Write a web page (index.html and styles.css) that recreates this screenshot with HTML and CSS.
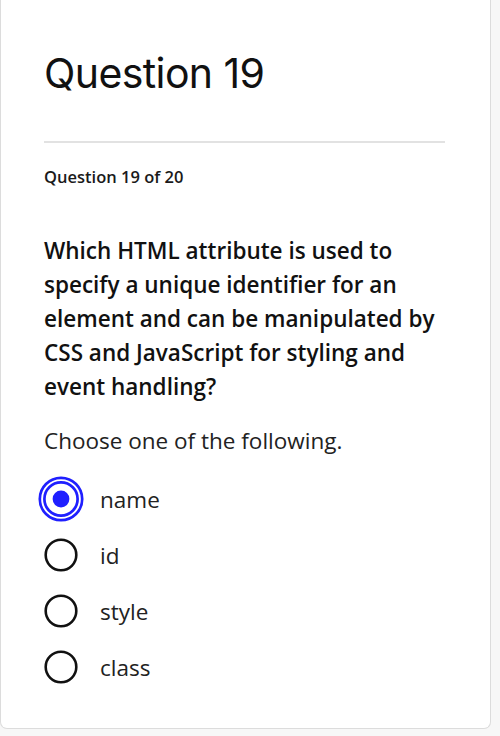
FILE: index.html
```html
<!DOCTYPE html>
<html>
<head>
<meta charset="utf-8">
<link rel="stylesheet" href="styles.css">
</head>
<body>
<div class="card">
  <h1 class="title">Question 19</h1>
  <hr class="divider">
  <div class="counter">Question 19 of 20</div>
  <p class="question">Which HTML attribute is used to specify a unique identifier for an element and can be manipulated by CSS and JavaScript for styling and event handling?</p>
  <p class="prompt">Choose one of the following.</p>
  <div class="options">
    <div class="option">
      <span class="radio">
        <svg width="48" height="48" viewBox="0 0 48 48"><circle cx="24" cy="24" r="21.2" fill="none" stroke="#1f1fff" stroke-width="2.7"/><circle cx="24" cy="24" r="16.6" fill="none" stroke="#1f1fff" stroke-width="2.7"/><circle cx="24" cy="24" r="8.4" fill="#1f1fff"/></svg>
      </span>
      <span class="label">name</span>
    </div>
    <div class="option">
      <span class="radio"><svg width="48" height="48" viewBox="0 0 48 48"><circle cx="24" cy="24" r="15.3" fill="none" stroke="#111" stroke-width="2.6"/></svg></span>
      <span class="label">id</span>
    </div>
    <div class="option">
      <span class="radio"><svg width="48" height="48" viewBox="0 0 48 48"><circle cx="24" cy="24" r="15.3" fill="none" stroke="#111" stroke-width="2.6"/></svg></span>
      <span class="label">style</span>
    </div>
    <div class="option">
      <span class="radio"><svg width="48" height="48" viewBox="0 0 48 48"><circle cx="24" cy="24" r="15.3" fill="none" stroke="#111" stroke-width="2.6"/></svg></span>
      <span class="label">class</span>
    </div>
  </div>
</div>
</body>
</html>
```
FILE: styles.css
```css
html, body { margin: 0; padding: 0; }
body { background: #f7f7f7; width: 500px; height: 736px; overflow: hidden; }
.card {
  box-sizing: border-box;
  width: 491px;
  height: 729px;
  background: #fff;
  border: 1px solid #dcdcdc;
  border-top: none;
  border-radius: 0 0 7px 7px;
  padding: 48px 45px 0 43px;
  color: #111;
}
.title {
  margin: 0;
  font-family: Inter, "Liberation Sans", sans-serif;
  font-weight: 400;
  font-size: 41px;
  line-height: 50px;
  letter-spacing: -0.6px;
}
.divider {
  margin: 43px 0 0 0;
  border: none;
  border-top: 2px solid #e2e2e2;
  height: 0;
}
.counter {
  margin-top: 23px;
  font-family: "Open Sans", sans-serif;
  font-weight: 600;
  font-size: 16.5px;
  line-height: 22px;
  color: #1a1a1a;
}
.question {
  margin: 46px 0 0 0;
  font-family: "Open Sans", sans-serif;
  font-weight: 600;
  font-size: 22.5px;
  line-height: 34px;
  color: #111;
}
.prompt {
  margin: 20px 0 0 0;
  font-family: "Open Sans", sans-serif;
  font-weight: 400;
  font-size: 22.5px;
  line-height: 34px;
  color: #222;
}
.options {
  margin-top: 17px;
  display: flex;
  flex-direction: column;
  gap: 8px;
}
.option {
  display: flex;
  align-items: center;
  gap: 15px;
  height: 48px;
  margin-left: -7px;
}
.radio { display: flex; width: 48px; height: 48px; }
.label {
  font-family: "Open Sans", sans-serif;
  font-weight: 400;
  font-size: 22.5px;
  color: #222;
}
```
